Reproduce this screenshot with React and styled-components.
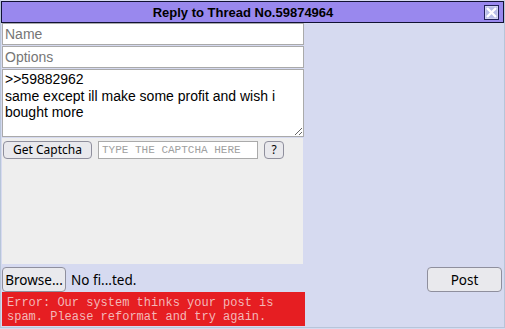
import React from "react";
import styled, { createGlobalStyle } from "styled-components";

const Global = createGlobalStyle`
  html, body { margin: 0; padding: 0; background: #d6daf0; }
  * { box-sizing: border-box; }
`;

const Window = styled.div`
  width: 505px;
  height: 328px;
  background: #d6daf0;
  border: 1px solid #b7c5d9;
  border-top-color: #d6daf0;
  display: flex;
  flex-direction: column;
  font-family: "Liberation Sans", Arial, sans-serif;
`;

const Header = styled.div`
  height: 22px;
  background: #9988ee;
  border: 1px solid #111133;
  display: flex;
  align-items: center;
  font-weight: bold;
  font-size: 13px;
  color: #000;
`;

const Title = styled.div`
  flex: 1;
  text-align: center;
`;

const Close = styled.span`
  width: 18px;
  height: 15px;
  display: flex;
  align-items: center;
  margin-right: 1px;
`;

const Column = styled.div`
  width: 302px;
  margin-left: 1px;
  display: flex;
  flex-direction: column;
  gap: 1px;
`;

const TextInput = styled.input`
  width: 302px;
  height: 22px;
  border: 1px solid #aaaaaa;
  background: #fff;
  padding: 0 2px;
  font-family: "Liberation Sans", Arial, sans-serif;
  font-size: 14px;
  outline: none;
  &::placeholder { color: #767676; }
`;

const Comment = styled.textarea`
  width: 302px;
  height: 68px;
  border: 1px solid #aaaaaa;
  background: #fff;
  padding: 1px 2px;
  font-family: "Liberation Sans", Arial, sans-serif;
  font-size: 14px;
  line-height: 16.5px;
  color: #000;
  resize: both;
  outline: none;
  display: block;
`;

const CaptchaArea = styled.div`
  width: 301px;
  height: 126px;
  background: #eeeeee;
  padding: 3px 0 0 1px;
  display: flex;
  align-items: flex-start;
`;

const SmallButton = styled.button`
  height: 18px;
  width: ${(p) => p.$w}px;
  margin-right: ${(p) => p.$mr || 0}px;
  padding: 0;
  border: 1px solid #8f8f9d;
  border-radius: 4px;
  background: #e9e9ed;
  font-family: "Noto Sans", "Open Sans", sans-serif;
  font-size: 12px;
  color: #000;
  line-height: 16px;
`;

const CaptchaInput = styled.input`
  width: 160px;
  height: 18px;
  margin-right: 6px;
  border: 1px solid #aaaaaa;
  background: #fff;
  padding: 0 3px;
  font-family: "Liberation Mono", "Courier New", monospace;
  font-size: 11px;
  outline: none;
  &::placeholder { color: #a0a0a0; }
`;

const Footer = styled.div`
  margin-top: 3px;
  padding: 0 2px 0 1px;
  display: flex;
  align-items: center;
  justify-content: space-between;
`;

const FileGroup = styled.div`
  display: flex;
  align-items: center;
  gap: 5px;
`;

const BigButton = styled.button`
  height: 25px;
  width: ${(p) => p.$w}px;
  padding: 0;
  border: 1px solid #8f8f9d;
  border-radius: 4px;
  background: #e9e9ed;
  font-family: "Noto Sans", "Open Sans", sans-serif;
  font-size: 13.5px;
  color: #000;
`;

const FileName = styled.span`
  font-family: "Noto Sans", "Open Sans", sans-serif;
  font-size: 13.5px;
  color: #000;
`;

const ErrorBox = styled.div`
  width: 303px;
  height: 34px;
  margin-left: 1px;
  background: #e61e22;
  color: #f3b8b8;
  font-family: "Liberation Mono", "Courier New", monospace;
  font-size: 12px;
  line-height: 14px;
  padding: 4px 5px 0;
  white-space: pre;
`;

function CloseIcon() {
  return (
    <svg width="15" height="15" viewBox="0 0 15 15">
      <rect x="0.5" y="0.5" width="14" height="14" fill="#d0d2f2" stroke="#22225a" />
      <rect x="2" y="2" width="11" height="11" fill="#b9bee8" />
      <path d="M3 3 L12 12 M12 3 L3 12" stroke="#ffffff" strokeWidth="2.4" />
    </svg>
  );
}

export default function App() {
  return (
    <>
      <Global />
      <Window>
        <Header>
          <Title>Reply to Thread No.59874964</Title>
          <Close>
            <CloseIcon />
          </Close>
        </Header>
        <Column>
          <TextInput placeholder="Name" />
          <TextInput placeholder="Options" />
          <Comment
            defaultValue={">>59882962\nsame except ill make some profit and wish i bought more"}
          />
          <CaptchaArea>
            <SmallButton $w={89} $mr={6}>Get Captcha</SmallButton>
            <CaptchaInput placeholder="TYPE THE CAPTCHA HERE" />
            <SmallButton $w={20}>?</SmallButton>
          </CaptchaArea>
        </Column>
        <Footer>
          <FileGroup>
            <BigButton $w={64}>Browse...</BigButton>
            <FileName>No fi...ted.</FileName>
          </FileGroup>
          <BigButton $w={75}>Post</BigButton>
        </Footer>
        <ErrorBox>{"Error: Our system thinks your post is\nspam. Please reformat and try again."}</ErrorBox>
      </Window>
    </>
  );
}
